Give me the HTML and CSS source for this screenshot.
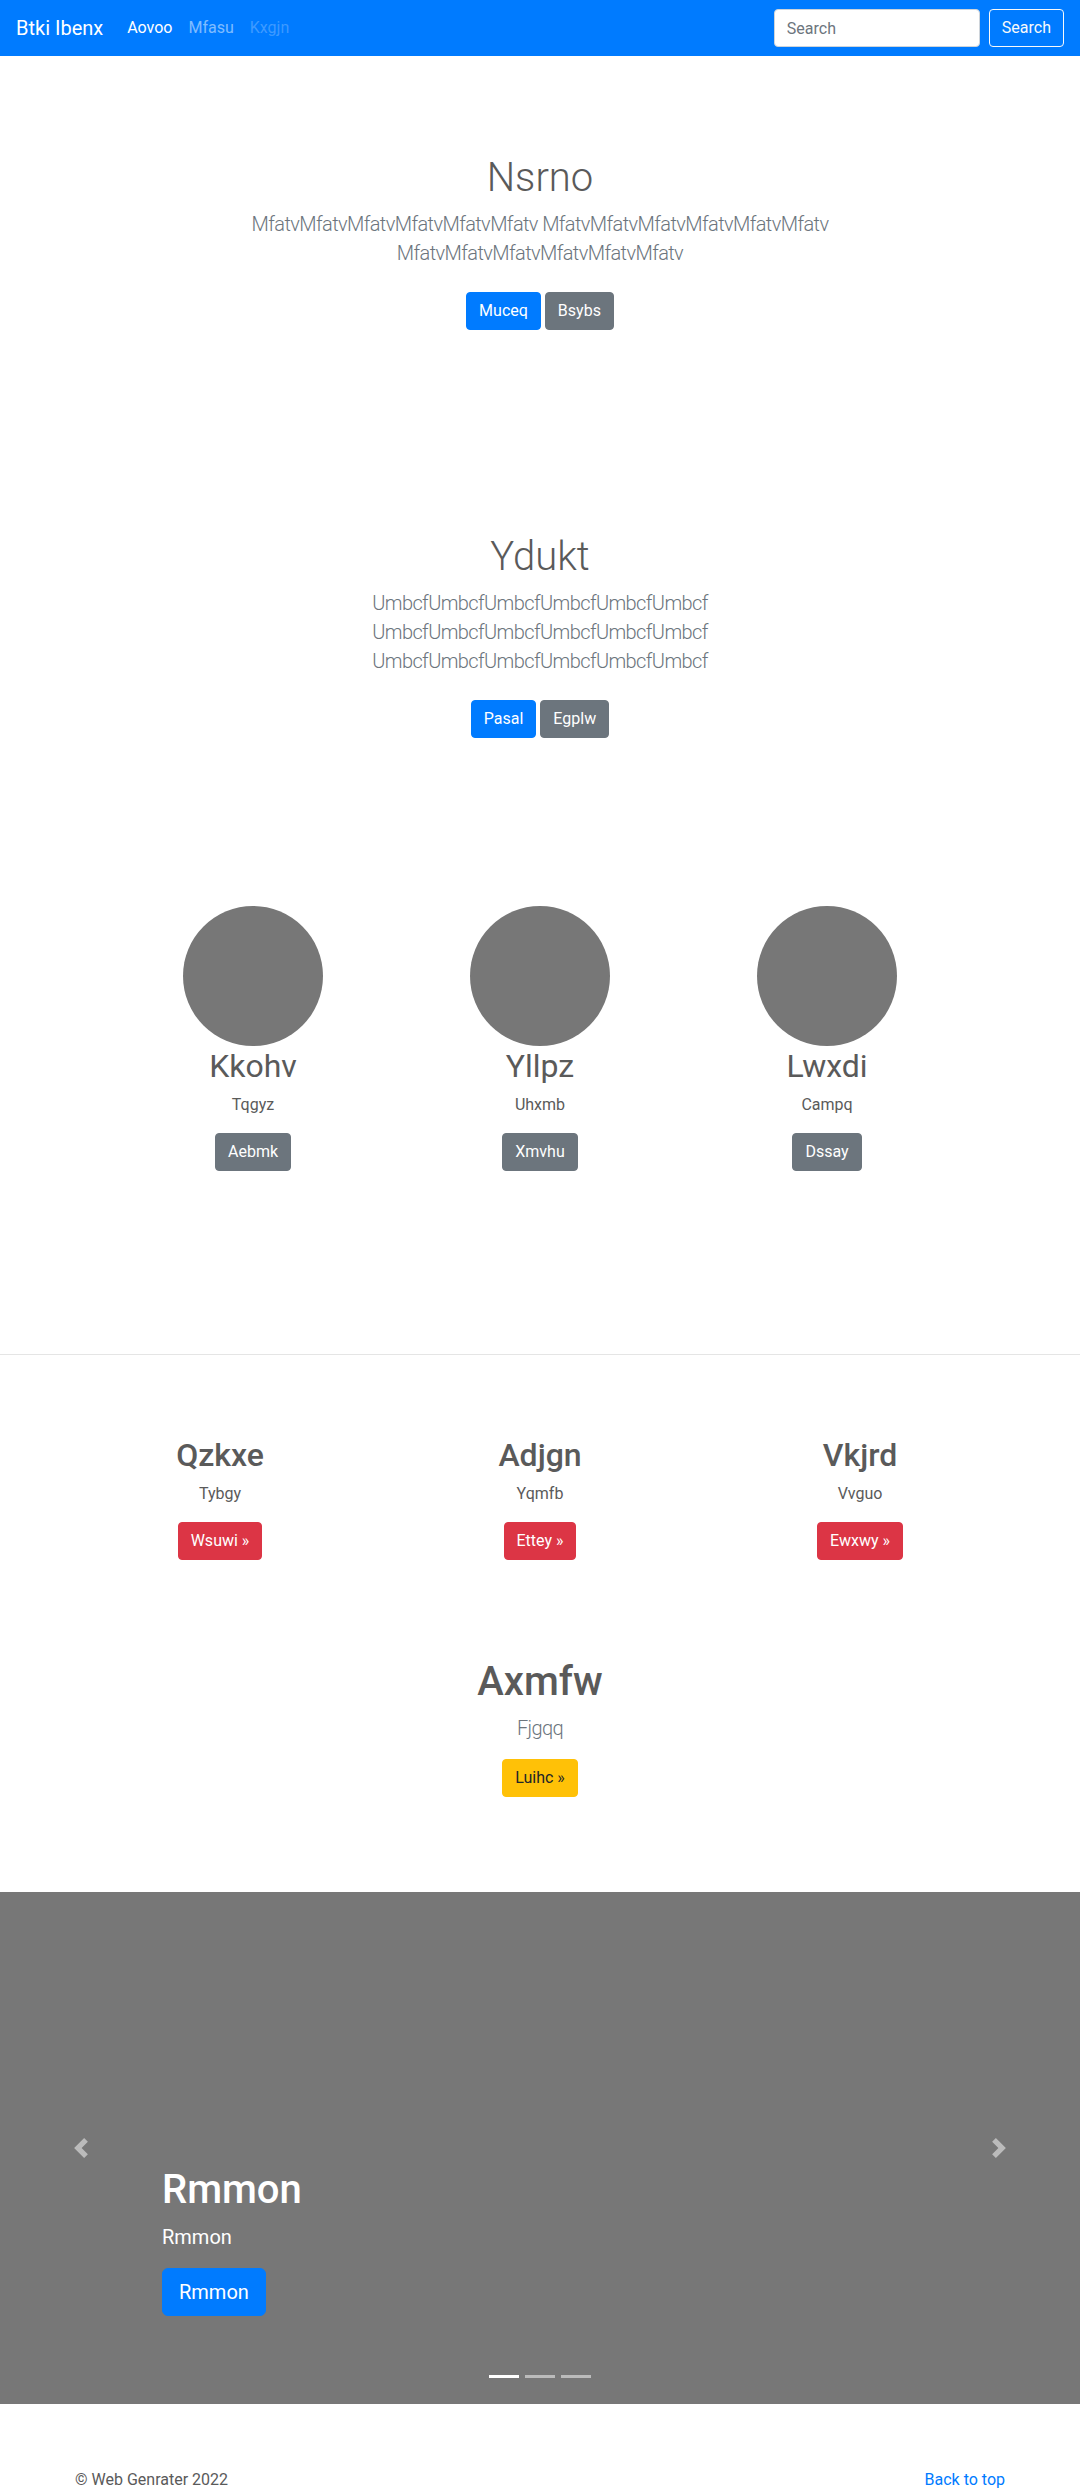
FILE: index.html
```html
<!DOCTYPE html>
<html lang="en">
<head>
<meta charset="utf-8">
<title>Btki Ibenx</title>
<link rel="stylesheet" href="styles.css">
</head>
<body>
<header class="navbar">
  <a class="brand" href="#">Btki Ibenx</a>
  <nav class="nav">
    <a class="nav-link active" href="#">Aovoo</a>
    <a class="nav-link" href="#">Mfasu</a>
    <a class="nav-link disabled" href="#">Kxgjn</a>
  </nav>
  <form class="search">
    <input class="search-input" type="text" placeholder="Search">
    <button class="btn btn-outline-light" type="button">Search</button>
  </form>
</header>

<main>
  <section class="hero hero-first">
    <div class="hero-inner">
      <h1 class="hero-title">Nsrno</h1>
      <p class="lead">MfatvMfatvMfatvMfatvMfatvMfatv MfatvMfatvMfatvMfatvMfatvMfatv MfatvMfatvMfatvMfatvMfatvMfatv</p>
      <div class="actions">
        <a class="btn btn-primary" href="#">Muceq</a>
        <a class="btn btn-secondary" href="#">Bsybs</a>
      </div>
    </div>
  </section>

  <section class="hero hero-second">
    <div class="hero-inner">
      <h1 class="hero-title">Ydukt</h1>
      <p class="lead">UmbcfUmbcfUmbcfUmbcfUmbcfUmbcf UmbcfUmbcfUmbcfUmbcfUmbcfUmbcf UmbcfUmbcfUmbcfUmbcfUmbcfUmbcf</p>
      <div class="actions">
        <a class="btn btn-primary" href="#">Pasal</a>
        <a class="btn btn-secondary" href="#">Egplw</a>
      </div>
    </div>
  </section>

  <section class="marketing">
    <div class="marketing-row">
      <div class="marketing-col">
        <svg class="avatar" width="140" height="140" viewBox="0 0 140 140"><circle cx="70" cy="70" r="70" fill="#777"/></svg>
        <h2 class="marketing-title">Kkohv</h2>
        <p class="col-text">Tqgyz</p>
        <a class="btn btn-secondary" href="#">Aebmk</a>
      </div>
      <div class="marketing-col">
        <svg class="avatar" width="140" height="140" viewBox="0 0 140 140"><circle cx="70" cy="70" r="70" fill="#777"/></svg>
        <h2 class="marketing-title">Yllpz</h2>
        <p class="col-text">Uhxmb</p>
        <a class="btn btn-secondary" href="#">Xmvhu</a>
      </div>
      <div class="marketing-col">
        <svg class="avatar" width="140" height="140" viewBox="0 0 140 140"><circle cx="70" cy="70" r="70" fill="#777"/></svg>
        <h2 class="marketing-title">Lwxdi</h2>
        <p class="col-text">Campq</p>
        <a class="btn btn-secondary" href="#">Dssay</a>
      </div>
    </div>
  </section>

  <hr class="divider">

  <section class="features">
    <div class="features-row">
      <div class="feature-col">
        <h2 class="feature-title">Qzkxe</h2>
        <p class="col-text">Tybgy</p>
        <a class="btn btn-danger" href="#">Wsuwi &raquo;</a>
      </div>
      <div class="feature-col">
        <h2 class="feature-title">Adjgn</h2>
        <p class="col-text">Yqmfb</p>
        <a class="btn btn-danger" href="#">Ettey &raquo;</a>
      </div>
      <div class="feature-col">
        <h2 class="feature-title">Vkjrd</h2>
        <p class="col-text">Vvguo</p>
        <a class="btn btn-danger" href="#">Ewxwy &raquo;</a>
      </div>
    </div>
  </section>

  <section class="callout">
    <h1 class="callout-title">Axmfw</h1>
    <p class="lead">Fjgqq</p>
    <a class="btn btn-warning" href="#">Luihc &raquo;</a>
  </section>

  <section class="carousel">
    <div class="caption">
      <h1 class="caption-title">Rmmon</h1>
      <p class="caption-text">Rmmon</p>
      <div><a class="btn btn-primary btn-lg" href="#">Rmmon</a></div>
    </div>
    <a class="control control-prev" href="#" aria-label="Previous">
      <svg width="20" height="20" viewBox="0 0 8 8"><path fill="#fff" d="M5.25 0l-4 4 4 4 1.5-1.5L4.25 4l2.5-2.5L5.25 0z"/></svg>
    </a>
    <a class="control control-next" href="#" aria-label="Next">
      <svg width="20" height="20" viewBox="0 0 8 8"><path fill="#fff" d="M2.75 0l-1.5 1.5L3.75 4l-2.5 2.5L2.75 8l4-4-4-4z"/></svg>
    </a>
    <ol class="indicators">
      <li class="indicator active"></li>
      <li class="indicator"></li>
      <li class="indicator"></li>
    </ol>
  </section>
</main>

<footer class="footer">
  <p class="footer-text">&copy; Web Genrater 2022</p>
  <p class="footer-text"><a class="link" href="#">Back to top</a></p>
</footer>
</body>
</html>
```

FILE: styles.css
```css
* {
  box-sizing: border-box;
}

html,
body {
  margin: 0;
  padding: 0;
}

body {
  font-family: Roboto, "Segoe UI", "Helvetica Neue", Arial, sans-serif;
  font-size: 16px;
  line-height: 1.5;
  color: #5a5a5a;
  background: #fff;
}

a {
  text-decoration: none;
}

h1,
h2,
p {
  margin: 0;
}

/* Navbar */
.navbar {
  height: 56px;
  background: #007bff;
  display: flex;
  align-items: center;
  padding: 0 16px;
}

.brand {
  font-size: 20px;
  line-height: 30px;
  color: #fff;
  margin-right: 16px;
}

.nav {
  display: flex;
}

.nav-link {
  padding: 8px;
  color: rgba(255, 255, 255, 0.5);
}

.nav-link.active {
  color: #fff;
}

.nav-link.disabled {
  color: rgba(255, 255, 255, 0.25);
}

.search {
  margin: 0 0 0 auto;
  display: flex;
  align-items: center;
}

.search-input {
  width: 206px;
  height: 38px;
  padding: 6px 12px;
  font: inherit;
  font-size: 16px;
  color: #495057;
  background: #fff;
  border: 1px solid #ced4da;
  border-radius: 4px;
  margin-right: 9px;
}

.search-input::placeholder {
  color: #6c757d;
}

/* Buttons */
.btn {
  display: inline-block;
  font-family: inherit;
  font-size: 16px;
  font-weight: 400;
  line-height: 24px;
  padding: 6px 12px;
  border: 1px solid transparent;
  border-radius: 4px;
  color: #fff;
  cursor: pointer;
}

.btn-outline-light {
  background: transparent;
  border-color: #f8f9fa;
  color: #f8f9fa;
}

.btn-primary {
  background: #007bff;
  border-color: #007bff;
}

.btn-secondary {
  background: #6c757d;
  border-color: #6c757d;
}

.btn-danger {
  background: #dc3545;
  border-color: #dc3545;
}

.btn-warning {
  background: #ffc107;
  border-color: #ffc107;
  color: #212529;
}

.btn-lg {
  font-size: 20px;
  line-height: 30px;
  padding: 8px 16px;
  border-radius: 6px;
}

/* Hero sections */
.hero {
  text-align: center;
  padding: 94px 15px 94px;
}

.hero-first {
  padding-top: 98px;
  padding-bottom: 101px;
}

.hero-second {
  padding-bottom: 92px;
}

.hero-inner {
  max-width: 660px;
  margin: 0 auto;
}

.hero-title {
  font-size: 40px;
  font-weight: 300;
  line-height: 48px;
  margin-bottom: 8px;
}

.lead {
  font-size: 20px;
  font-weight: 300;
  line-height: 29px;
  letter-spacing: -0.6px;
  color: #6c757d;
  margin-bottom: 16px;
}

.actions {
  display: flex;
  justify-content: center;
  gap: 4px;
  padding: 8px 0;
}

/* Marketing circles */
.marketing {
  padding: 68px 0 183px;
}

.marketing-row {
  display: grid;
  grid-template-columns: repeat(3, 287px);
  justify-content: center;
}

.marketing-col {
  text-align: center;
}

.avatar {
  display: block;
  margin: 0 auto;
}

.marketing-title {
  font-size: 32px;
  font-weight: 400;
  line-height: 38px;
  margin: 1px 0 8px;
}

.col-text {
  margin-bottom: 16px;
}

.divider {
  border: 0;
  height: 1px;
  margin: 0;
  background: rgba(0, 0, 0, 0.1);
}

/* Features */
.features {
  padding-top: 81px;
}

.features-row {
  display: grid;
  grid-template-columns: repeat(3, 320px);
  justify-content: center;
}

.feature-col {
  text-align: center;
}

.feature-title {
  font-size: 32px;
  font-weight: 500;
  line-height: 38px;
  margin-bottom: 8px;
}

/* Callout */
.callout {
  text-align: center;
  padding-top: 98px;
}

.callout-title {
  font-size: 40px;
  font-weight: 500;
  line-height: 48px;
  margin-bottom: 8px;
}

/* Carousel */
.carousel {
  position: relative;
  margin-top: 95px;
  height: 512px;
  background: #777;
  display: flex;
  flex-direction: column;
  justify-content: flex-end;
  padding: 0 15% 88px 15%;
}

.caption {
  color: #fff;
  text-align: left;
}

.caption-title {
  font-size: 40px;
  font-weight: 500;
  line-height: 48px;
  margin-bottom: 8px;
}

.caption-text {
  font-size: 20px;
  line-height: 30px;
  margin-bottom: 16px;
}

.control {
  position: absolute;
  top: 0;
  bottom: 0;
  width: 15%;
  display: flex;
  align-items: center;
  justify-content: center;
  opacity: 0.5;
}

.control svg {
  display: block;
}

.control-prev {
  left: 0;
}

.control-next {
  right: 0;
}

.indicators {
  position: absolute;
  left: 0;
  right: 0;
  bottom: 0;
  margin: 0 15% 16px;
  padding: 0;
  list-style: none;
  display: flex;
  justify-content: center;
}

.indicator {
  width: 30px;
  height: 23px;
  margin: 0 3px;
  border-top: 10px solid transparent;
  border-bottom: 10px solid transparent;
  background: #fff;
  background-clip: padding-box;
  opacity: 0.5;
}

.indicator.active {
  opacity: 1;
}

/* Footer */
.footer {
  width: 960px;
  margin: 64px auto 0;
  padding: 0 15px 48px;
  display: flex;
  justify-content: space-between;
}

.footer-text {
  margin-bottom: 16px;
}

.link {
  color: #007bff;
}
```
